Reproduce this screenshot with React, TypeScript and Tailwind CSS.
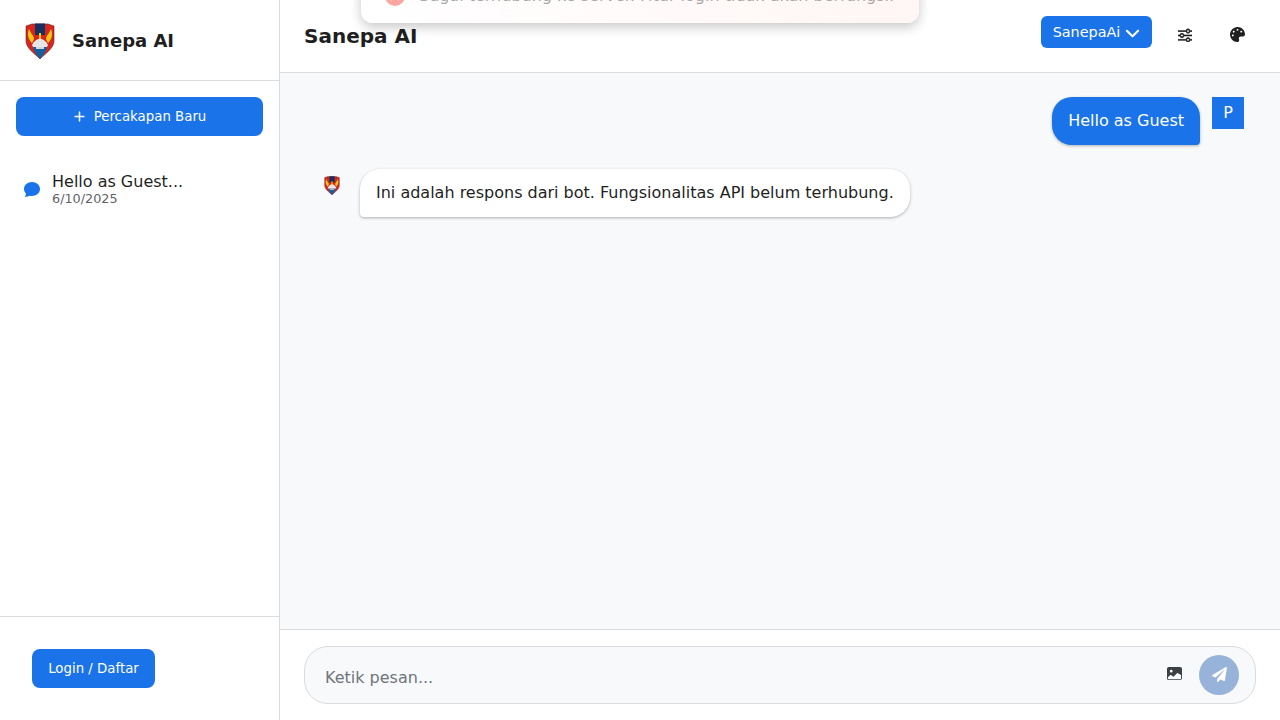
import React from 'react';
import { BsChatFill, BsChevronDown, BsImageFill, BsPlusLg, BsSliders, BsXCircleFill } from 'react-icons/bs';
import { FaPalette, FaPaperPlane } from 'react-icons/fa';

const Logo = ({ className }: { className?: string }) => (
    <svg viewBox="0 0 30 36" className={className}>
        <path d="M1 3 L7 1 L23 1 L29 3 L29 18 C29 25 21 30 15 36 C9 30 1 25 1 18 Z" fill="#d9261c" stroke="#5a2a2a" strokeWidth="0.6" />
        <path d="M10 0.5 H20 V12 H10 Z" fill="#15305f" />
        <path d="M4 6 C2 11 3 16 7 20 L9 16 C9 13 7 12 6 10 Z" fill="#f7c917" />
        <path d="M26 6 C28 11 27 16 23 20 L21 16 C21 13 23 12 24 10 Z" fill="#f7c917" />
        <path d="M14 10 H16 V17 H14 Z" fill="#f7d117" />
        <path d="M7 22 C9 18 12 16 15 15.5 C18 16 21 18 23 22 L22 24 H8 Z" fill="#e6e6e6" />
        <path d="M8 24 H22 C21 29 18 32 15 36 C12 32 9 29 8 24 Z" fill="#14609f" />
        <path d="M11 24 H19 V26 H11 Z" fill="#d8d8d8" />
    </svg>
);

const App: React.FC = () => {
    return (
        <div className="flex h-screen w-full overflow-hidden bg-white text-[#1f1f1f] font-['DejaVu_Sans',sans-serif]">
            <aside className="flex h-full w-[280px] shrink-0 flex-col border-r border-[#dcdce0] bg-white">
                <div className="flex h-[81px] items-center gap-4 border-b border-[#dcdce0] px-6 pt-[1px]">
                    <Logo className="h-9 w-8" />
                    <h1 className="text-lg font-bold">Sanepa AI</h1>
                </div>

                <div className="px-4 pt-4">
                    <button className="flex h-[39px] w-full items-center justify-center gap-2 rounded-lg bg-[#1a73e8] text-[13.33px] text-white">
                        <BsPlusLg className="h-[13px] w-[13px] stroke-[0.8]" /> Percakapan Baru
                    </button>
                </div>

                <div className="flex-1 px-4 pt-[36px]">
                    <div className="flex items-center gap-3 px-2">
                        <BsChatFill className="h-4 w-4 text-[#1a73e8]" />
                        <div>
                            <div className="text-base leading-[20px]">Hello as Guest...</div>
                            <div className="text-[12.8px] leading-[14px] text-[#5f6368]">6/10/2025</div>
                        </div>
                    </div>
                </div>

                <div className="border-t border-[#dcdce0] px-8 pt-8 pb-8">
                    <button className="h-[39px] w-[123px] rounded-lg bg-[#1a73e8] text-[13.33px] text-white">Login / Daftar</button>
                </div>
            </aside>

            <main className="relative flex h-full min-w-0 flex-1 flex-col">
                <header className="flex h-[73px] items-center justify-between border-b border-[#dcdce0] bg-white pr-[25px] pl-6">
                    <h2 className="text-xl font-bold">Sanepa AI</h2>
                    <div className="flex items-center gap-4 pb-[3px]">
                        <button className="mb-[5px] -mr-px flex h-8 w-[111px] items-center justify-center gap-[5px] rounded-md bg-[#1a73e8] pt-[2px] text-[14.4px] text-white">
                            SanepaAi <BsChevronDown className="h-[15px] w-[15px] stroke-[1.2]" />
                        </button>
                        <button className="flex h-9 w-9 items-center justify-center"><BsSliders className="h-[14px] w-[14px] stroke-[0.8]" /></button>
                        <button className="flex h-9 w-9 items-center justify-center"><FaPalette className="h-[15px] w-[15px]" /></button>
                    </div>
                </header>

                <div className="flex flex-1 flex-col gap-6 bg-[#f8f9fa] px-9 pt-6">
                    <div className="flex items-start justify-end gap-3">
                        <div className="rounded-[20px] rounded-br-[4px] bg-[#1a73e8] px-4 py-3 text-base leading-6 text-white shadow-[0_1px_3px_rgba(0,0,0,0.3)]">Hello as Guest</div>
                        <div className="flex h-8 w-8 items-center justify-center bg-[#1a73e8] text-base text-white">P</div>
                    </div>
                    <div className="flex items-start gap-3">
                        <div className="flex h-8 w-8 items-center justify-center"><Logo className="h-[19px] w-4" /></div>
                        <div className="rounded-[20px] rounded-bl-[4px] bg-white px-4 py-3 text-base leading-6 shadow-[0_1px_3px_rgba(0,0,0,0.3)]">Ini adalah respons dari bot. Fungsionalitas API belum terhubung.</div>
                    </div>
                </div>

                <div className="border-t border-[#dcdce0] bg-white px-6 pt-4 pb-4">
                    <div className="flex h-[58px] items-center rounded-[24px] border border-[#dcdce0] bg-[#f8f9fa] pr-4 pl-5">
                        <span className="flex-1 pt-[6px] text-base text-[#70757a]">Ketik pesan...</span>
                        <BsImageFill className="mr-[17px] mb-[3px] h-[15px] w-[15px] text-[#3c4043]" />
                        <button className="flex h-10 w-10 items-center justify-center rounded-full bg-[#97b3d9]">
                            <FaPaperPlane className="mb-[2px] h-[15px] w-[15px] text-white" />
                        </button>
                    </div>
                </div>

                <div className="absolute -top-[31px] left-[81px] flex h-[54px] w-[558px] items-center gap-3 rounded-xl bg-gradient-to-r from-white to-[#fff6f5] px-6 text-base text-[#a8a8a8] shadow-[0_4px_12px_rgba(0,0,0,0.22)]">
                    <BsXCircleFill className="h-5 w-5 text-[#f9a6a0]" />
                    Gagal terhubung ke server. Fitur login tidak akan berfungsi.
                </div>
            </main>
        </div>
    );
};

export default App;
